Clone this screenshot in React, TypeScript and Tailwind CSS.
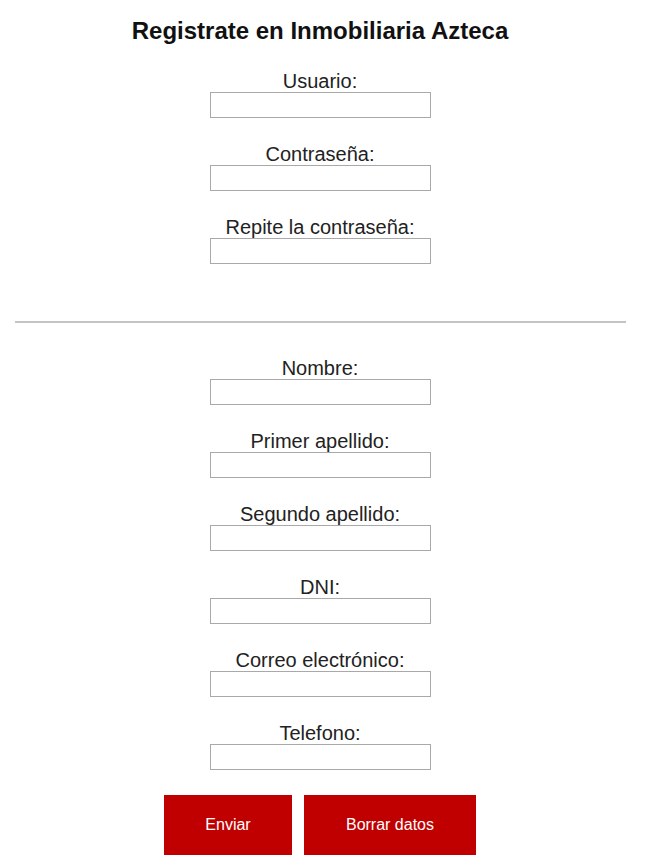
const Field = ({ label }: { label: string }) => {
  return (
    <div className="flex flex-col items-center mb-[25px]">
      <label className="text-[20px] leading-[22px] text-[#222]">{label}</label>
      <input
        type="text"
        className="w-[221px] h-[26px] border border-[#a9a9a9] bg-white outline-none"
      />
    </div>
  );
};

const App = () => {
  return (
    <div
      className="w-[640px] min-h-[868px] bg-white flex flex-col items-center pt-[17px]"
      style={{ fontFamily: '"Liberation Sans", Arial, sans-serif' }}
    >
      <h2 className="font-bold text-[24px] leading-[28px] text-[#111] mb-[25px]">
        Registrate en Inmobiliaria Azteca
      </h2>
      <Field label="Usuario:" />
      <Field label="Contraseña:" />
      <Field label="Repite la contraseña:" />
      <div className="w-[611px] h-[2px] bg-[#c4c4c4] mt-[32px] mb-[34px]" />
      <Field label="Nombre:" />
      <Field label="Primer apellido:" />
      <Field label="Segundo apellido:" />
      <Field label="DNI:" />
      <Field label="Correo electrónico:" />
      <Field label="Telefono:" />
      <div className="flex gap-[12px]">
        <button className="w-[128px] h-[60px] bg-[#c00000] text-white text-[16px]">
          Enviar
        </button>
        <button className="w-[172px] h-[60px] bg-[#c00000] text-white text-[16px]">
          Borrar datos
        </button>
      </div>
    </div>
  );
};

export default App;
